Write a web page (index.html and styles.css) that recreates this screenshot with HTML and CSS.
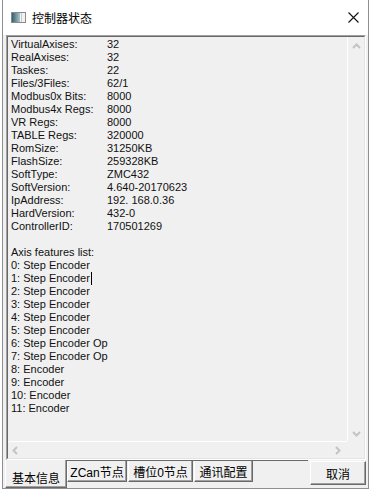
FILE: index.html
```html
<!DOCTYPE html>
<html>
<head>
<meta charset="utf-8">
<link rel="stylesheet" href="styles.css">
</head>
<body>
<div class="window">
  <div class="titlebar">
    <svg class="app-icon" viewBox="0 0 15 11" width="15" height="11">
      <defs>
        <linearGradient id="ig" x1="0" y1="0" x2="1" y2="0">
          <stop offset="0" stop-color="#35636e"/>
          <stop offset="1" stop-color="#a9c5ca"/>
        </linearGradient>
      </defs>
      <rect x="0.5" y="0.5" width="14" height="10" fill="#f2f2f2" stroke="#8a8a8a"/>
      <rect x="1" y="1" width="8" height="9" fill="url(#ig)"/>
      <rect x="10" y="1" width="1" height="9" fill="#c9c9c9"/>
    </svg>
    <span class="title">控制器状态</span>
    <svg class="close" viewBox="0 0 11 11" width="11" height="11">
      <path d="M0.5 0.5 L10.5 10.5 M10.5 0.5 L0.5 10.5" stroke="#111" stroke-width="1.1" fill="none"/>
    </svg>
  </div>
  <div class="client">
    <div class="textbox">
      <div class="textbox-inner">
        <div class="viewport">
          <div class="kv">
            <span>VirtualAxises:</span><span>32</span>
            <span>RealAxises:</span><span>32</span>
            <span>Taskes:</span><span>22</span>
            <span>Files/3Files:</span><span>62/1</span>
            <span>Modbus0x Bits:</span><span>8000</span>
            <span>Modbus4x Regs:</span><span>8000</span>
            <span>VR Regs:</span><span>8000</span>
            <span>TABLE Regs:</span><span>320000</span>
            <span>RomSize:</span><span>31250KB</span>
            <span>FlashSize:</span><span>259328KB</span>
            <span>SoftType:</span><span>ZMC432</span>
            <span>SoftVersion:</span><span>4.640-20170623</span>
            <span>IpAddress:</span><span>192. 168.0.36</span>
            <span>HardVersion:</span><span>432-0</span>
            <span>ControllerID:</span><span>170501269</span>
          </div>
          <div class="line blank"></div>
          <div class="line">Axis features list:</div>
          <div class="line">0: Step Encoder</div>
          <div class="line">1: Step Encoder<span class="caret"></span></div>
          <div class="line">2: Step Encoder</div>
          <div class="line">3: Step Encoder</div>
          <div class="line">4: Step Encoder</div>
          <div class="line">5: Step Encoder</div>
          <div class="line">6: Step Encoder Op</div>
          <div class="line">7: Step Encoder Op</div>
          <div class="line">8: Encoder</div>
          <div class="line">9: Encoder</div>
          <div class="line">10: Encoder</div>
          <div class="line">11: Encoder</div>
        </div>
        <div class="vscroll">
          <svg width="9" height="6" viewBox="0 0 9 6"><path d="M1 5 L4.5 1.5 L8 5" fill="none" stroke="#c4c4c4" stroke-width="2"/></svg>
          <svg width="9" height="6" viewBox="0 0 9 6"><path d="M1 1 L4.5 4.5 L8 1" fill="none" stroke="#c4c4c4" stroke-width="2"/></svg>
        </div>
        <div class="hscroll">
          <svg width="6" height="9" viewBox="0 0 6 9"><path d="M5 1 L1.5 4.5 L5 8" fill="none" stroke="#c4c4c4" stroke-width="2"/></svg>
          <svg width="6" height="9" viewBox="0 0 6 9"><path d="M1 1 L4.5 4.5 L1 8" fill="none" stroke="#c4c4c4" stroke-width="2"/></svg>
        </div>
        <div class="corner"></div>
      </div>
    </div>
    <div class="bottom">
      <div class="tabstrip">
        <div class="tab active">基本信息</div>
        <div class="tab t2">ZCan节点</div>
        <div class="tab t3">槽位0节点</div>
        <div class="tab t4">通讯配置</div>
      </div>
      <div class="btn">取消</div>
    </div>
  </div>
</div>
</body>
</html>
```
FILE: styles.css
```css
* { box-sizing: border-box; }
html, body { margin: 0; padding: 0; }
body {
  width: 374px;
  height: 495px;
  overflow: hidden;
  background: #fff;
  font-family: "Liberation Sans", "Noto Sans CJK SC", sans-serif;
  color: #000;
}
.window {
  margin-left: 2px;
  width: 367px;
  height: 489px;
  border: 1px solid #8f8f8f;
  border-top: none;
  background: #f0f0f0;
  display: flex;
  flex-direction: column;
}
.titlebar {
  height: 35px;
  flex: none;
  background: #fff;
  display: flex;
  align-items: center;
  padding: 0 9px 0 8px;
}
.app-icon { flex: none; margin-top: -1px; }
.title {
  flex: 1;
  margin-left: 6px;
  font-family: "Noto Sans CJK SC", sans-serif;
  font-size: 12px;
}
.close { flex: none; }
.client {
  flex: 1;
  display: flex;
  flex-direction: column;
  padding: 0 2px 0 3px;
}
.textbox {
  height: 425px;
  flex: none;
  border: 1px solid;
  border-color: #a0a0a0 #fff #fff #a0a0a0;
}
.textbox-inner {
  height: 100%;
  border: 1px solid;
  border-color: #696969 #e3e3e3 #e3e3e3 #696969;
  display: grid;
  grid-template-columns: 1fr 17px;
  grid-template-rows: 1fr 17px;
}
.viewport {
  padding: 1px 0 0 3px;
  font-size: 11px;
  line-height: 13px;
  overflow: hidden;
  color: #111;
}
.kv {
  display: grid;
  grid-template-columns: 96px auto;
}
.line { height: 13px; white-space: nowrap; }
.caret {
  display: inline-block;
  width: 1px;
  height: 13px;
  margin-left: 1px;
  background: #000;
  vertical-align: top;
}
.vscroll {
  border-left: 1px solid #fff;
  display: flex;
  flex-direction: column;
  justify-content: space-between;
  align-items: center;
  padding: 6px 0 4px;
}
.hscroll {
  border-top: 1px solid #fff;
  display: flex;
  justify-content: space-between;
  align-items: center;
  padding: 0 6px 0 4px;
}
.bottom {
  height: 28px;
  flex: none;
  display: flex;
  align-items: flex-start;
}
.tabstrip {
  width: 303px;
  height: 28px;
  margin-left: -1px;
  border-top: 1px solid #696969;
  display: flex;
  align-items: flex-start;
}
.tab {
  height: 21px;
  border-left: 1px solid #fff;
  border-right: 1px solid #696969;
  border-bottom: 1px solid #696969;
  box-shadow: inset -1px -1px #a0a0a0;
  font-size: 12px;
  display: flex;
  align-items: center;
  justify-content: center;
  white-space: nowrap;
}
.tab.active {
  width: 62px;
  height: 28px;
  margin-top: -1px;
  background: #f0f0f0;
  align-items: flex-start;
  padding-top: 9px;
}
.t2 { width: 60px; }
.t3 { width: 65px; margin-left: 1px; }
.t4 { width: 59px; margin-left: 1px; }
.btn {
  width: 56px;
  height: 24px;
  margin-left: 2px;
  margin-top: 1px;
  border: 1px solid;
  border-color: #fff #696969 #696969 #fff;
  box-shadow: inset -1px -1px #a0a0a0;
  display: flex;
  align-items: center;
  justify-content: center;
  font-family: "Noto Sans CJK SC", sans-serif;
  font-size: 12px;
}
```
